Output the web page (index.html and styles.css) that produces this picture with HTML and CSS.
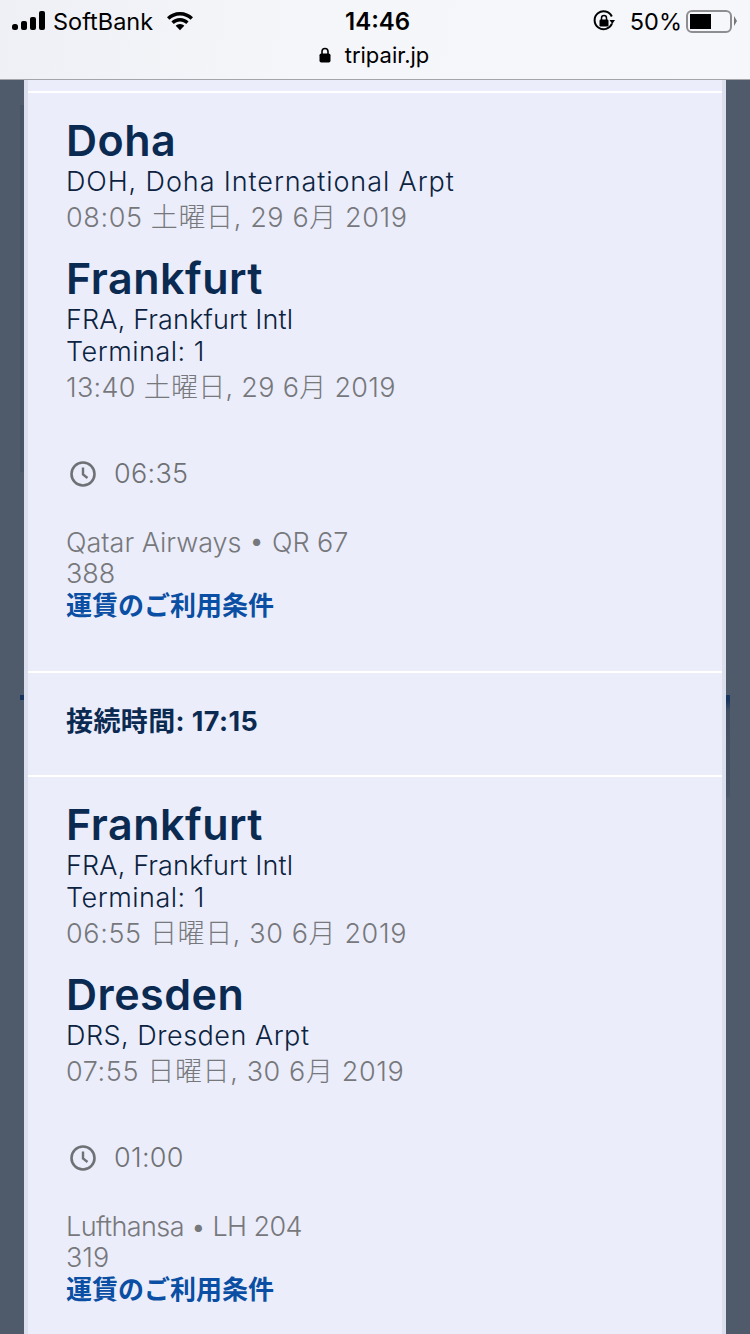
FILE: index.html
```html
<!DOCTYPE html>
<html lang="ja">
<head>
    <meta charset="UTF-8">
    <meta name="viewport" content="width=device-width, initial-scale=1.0">
    <title>tripair.jp</title>
    <link rel="stylesheet" href="styles.css">
</head>
<body>
    <header class="browser-bar">
        <div class="status-row">
            <div class="status-left">
                <svg class="signal" width="33" height="20" viewBox="0 0 33 20">
                    <rect x="0" y="13" width="6" height="6" rx="2.500" fill="#000"/>
                    <rect x="9" y="10" width="6" height="9" rx="2" fill="#000"/>
                    <rect x="18" y="6" width="6" height="13" rx="2" fill="#000"/>
                    <rect x="27" y="0" width="6" height="19" rx="2" fill="#000"/>
                </svg>
                <span class="carrier">SoftBank</span>
                <svg class="wifi" width="28" height="20" viewBox="0 0 28 20">
                    <path d="M14 1C8.800 1 4.300 3 1 6.200L3.400 8.700C6.100 6 9.900 4.400 14 4.400S21.900 6 24.600 8.700L27 6.200C23.700 3 19.200 1 14 1Z" fill="#000"/>
                    <path d="M14 7C10.600 7 7.600 8.300 5.400 10.500L7.800 13C9.400 11.400 11.600 10.400 14 10.400S18.600 11.400 20.200 13L22.600 10.500C20.400 8.300 17.400 7 14 7Z" fill="#000"/>
                    <path d="M14 13C12.300 13 10.800 13.700 9.700 14.800L14 19.300L18.300 14.800C17.200 13.700 15.700 13 14 13Z" fill="#000"/>
                </svg>
            </div>
            <div class="clock">14:46</div>
            <div class="status-right">
                <svg class="rotation" width="24" height="24" viewBox="0 0 24 24">
                    <path d="M20 14.500A9 9 0 1 1 19.800 7.500" fill="none" stroke="#000" stroke-width="2"/>
                    <path d="M23 11L17.500 11L20.300 15Z" fill="#000"/>
                    <rect x="7.500" y="10.500" width="9" height="7" rx="1.200" fill="#000"/>
                    <path d="M9.500 11V9A2.500 2.500 0 0 1 14.500 9V11" fill="none" stroke="#000" stroke-width="1.500"/>
                </svg>
                <span class="battery-text">50%</span>
                <div class="battery"><div class="battery-level"></div></div>
                <div class="battery-cap"></div>
            </div>
        </div>
        <div class="url-row">
            <svg width="12" height="16" viewBox="0 0 12 16">
                <path d="M3 7V4.500A3 3 0 0 1 9 4.500V7" fill="none" stroke="#000" stroke-width="1.600"/>
                <rect x="0.500" y="6.500" width="11" height="9" rx="1.800" fill="#000"/>
            </svg>
            <span>tripair.jp</span>
        </div>
    </header>

    <main class="page">
        <div class="behind behind-left"></div>
        <div class="behind behind-dot"></div>
        <div class="behind behind-right"></div>
        <div class="panel">
            <section class="leg leg-first">
                <h2 class="city">Doha</h2>
                <p class="airport airport-wide">DOH, Doha International Arpt</p>
                <p class="when">08:05 土曜日, 29 6月 2019</p>
                <h2 class="city city-next">Frankfurt</h2>
                <p class="airport airport-tight">FRA, Frankfurt Intl</p>
                <p class="airport">Terminal: 1</p>
                <p class="when when-tight">13:40 土曜日, 29 6月 2019</p>
                <div class="duration">
                    <svg width="28" height="28" viewBox="0 0 28 28">
                        <circle cx="14" cy="14" r="11.500" fill="none" stroke="#6f7175" stroke-width="2.600"/>
                        <path d="M14 7.500V14.500L18.500 18" fill="none" stroke="#6f7175" stroke-width="2.400"/>
                    </svg>
                    <span>06:35</span>
                </div>
                <p class="flight">Qatar Airways • QR 67</p>
                <p class="flight">388</p>
                <a class="fare-link" href="#">運賃のご利用条件</a>
            </section>
            <section class="layover">接続時間: 17:15</section>
            <section class="leg">
                <h2 class="city">Frankfurt</h2>
                <p class="airport airport-tight">FRA, Frankfurt Intl</p>
                <p class="airport">Terminal: 1</p>
                <p class="when">06:55 日曜日, 30 6月 2019</p>
                <h2 class="city city-next">Dresden</h2>
                <p class="airport">DRS, Dresden Arpt</p>
                <p class="when">07:55 日曜日, 30 6月 2019</p>
                <div class="duration">
                    <svg width="28" height="28" viewBox="0 0 28 28">
                        <circle cx="14" cy="14" r="11.500" fill="none" stroke="#6f7175" stroke-width="2.600"/>
                        <path d="M14 7.500V14.500L18.500 18" fill="none" stroke="#6f7175" stroke-width="2.400"/>
                    </svg>
                    <span>01:00</span>
                </div>
                <p class="flight flight-tight">Lufthansa • LH 204</p>
                <p class="flight">319</p>
                <a class="fare-link" href="#">運賃のご利用条件</a>
            </section>
        </div>
    </main>
</body>
</html>
```

FILE: styles.css
```css
* {
    box-sizing: border-box;
}
html, body {
    margin: 0;
    height: 100%;
}
body {
    width: 750px;
    height: 1334px;
    overflow: hidden;
    background-color: #4f5b6b;
    font-family: Inter, "Noto Sans CJK JP", sans-serif;
}
p, h2 {
    margin: 0;
}

/* Browser bar */
.browser-bar {
    height: 80px;
    background: linear-gradient(100deg, #eef0f5 0%, #f5f6fa 40%, #f6f7fb 100%);
    border-bottom: 1px solid #a3a5aa;
    color: #000;
    position: relative;
}
.status-row {
    height: 40px;
    display: flex;
    align-items: center;
    justify-content: space-between;
    padding: 2px 13px 0 12px;
}
.status-left, .status-right {
    display: flex;
    align-items: center;
}
.carrier {
    font-size: 23.500px;
    margin-left: 8px;
}
.wifi {
    margin-left: 13px;
}
.clock {
    font-size: 24px;
    font-weight: 600;
    position: absolute;
    left: 345px;
    top: 7px;
}
.battery-text {
    font-size: 23.500px;
    margin-left: 14px;
}
.battery {
    width: 46px;
    height: 23px;
    border: 2px solid #8e8e90;
    border-radius: 6px;
    margin-left: 4px;
    padding: 2px;
}
.battery-level {
    width: 21px;
    height: 15px;
    background-color: #000;
}
.battery-cap {
    width: 0;
    height: 0;
    border-left: 3px solid #77777a;
    border-top: 5px solid transparent;
    border-bottom: 5px solid transparent;
    margin-left: 2px;
}
.url-row {
    display: flex;
    align-items: center;
    justify-content: center;
    gap: 14px;
    font-size: 22px;
    height: 30px;
    padding-right: 2px;
}

/* Page */
.page {
    width: 702px;
    margin-left: 24px;
    padding: 0 4px;
    height: 1254px;
    background-color: #dcdfee;
    position: relative;
}
/* cards of the page underneath, sticking out past the panel */
.behind {
    position: absolute;
}
.behind-left {
    left: -4px;
    top: 25px;
    width: 4px;
    height: 367px;
    background-color: #485567;
}
.behind-dot {
    left: -4px;
    top: 615px;
    width: 4px;
    height: 5px;
    background-color: #17355e;
}
.behind-right {
    right: -4px;
    top: 615px;
    width: 4px;
    height: 102px;
    background: linear-gradient(#17355e 0, #17355e 5px, #414e61 16px, #4a5668 100%);
}
.panel {
    height: 100%;
    background-color: #ebedfa;
    padding-top: 11px;
}
.leg {
    border-top: 2px solid #fff;
    padding: 24px 38px 0;
}
.leg-first {
    height: 580px;
}
.city {
    font-size: 43px;
    line-height: 46px;
    margin-bottom: 3px;
    font-weight: 600;
    letter-spacing: 0.5px;
    color: #0b2a52;
}
.city-next {
    margin-top: 17px;
}
.airport {
    font-size: 27px;
    line-height: 32px;
    font-weight: 300;
    letter-spacing: 0.5px;
    color: #0b2340;
}
.airport-wide {
    letter-spacing: 0.9px;
}
.airport-tight {
    letter-spacing: 0.15px;
}
.when {
    font-size: 27px;
    line-height: 40px;
    font-weight: 300;
    letter-spacing: 0.62px;
    color: #77787c;
}
.when-tight {
    letter-spacing: 0.3px;
}
.duration {
    display: flex;
    align-items: center;
    gap: 17px;
    margin-top: 49px;
    padding-left: 3px;
    font-size: 27px;
    font-weight: 300;
    letter-spacing: 0.3px;
    color: #6f7175;
}
.flight {
    font-size: 27px;
    line-height: 31px;
    font-weight: 300;
    color: #77787c;
}
.flight-tight {
    letter-spacing: -0.6px;
}
.duration + .flight {
    margin-top: 37px;
}
.fare-link {
    display: block;
    margin-top: 1px;
    font-size: 26px;
    line-height: 32px;
    font-weight: 700;
    color: #0a4fa3;
    text-decoration: none;
}
.layover {
    border-top: 2px solid #fff;
    height: 104px;
    padding: 0 38px 10px;
    display: flex;
    align-items: center;
    font-size: 27px;
    font-weight: 700;
    letter-spacing: 0.4px;
    color: #0b2a52;
}
```
